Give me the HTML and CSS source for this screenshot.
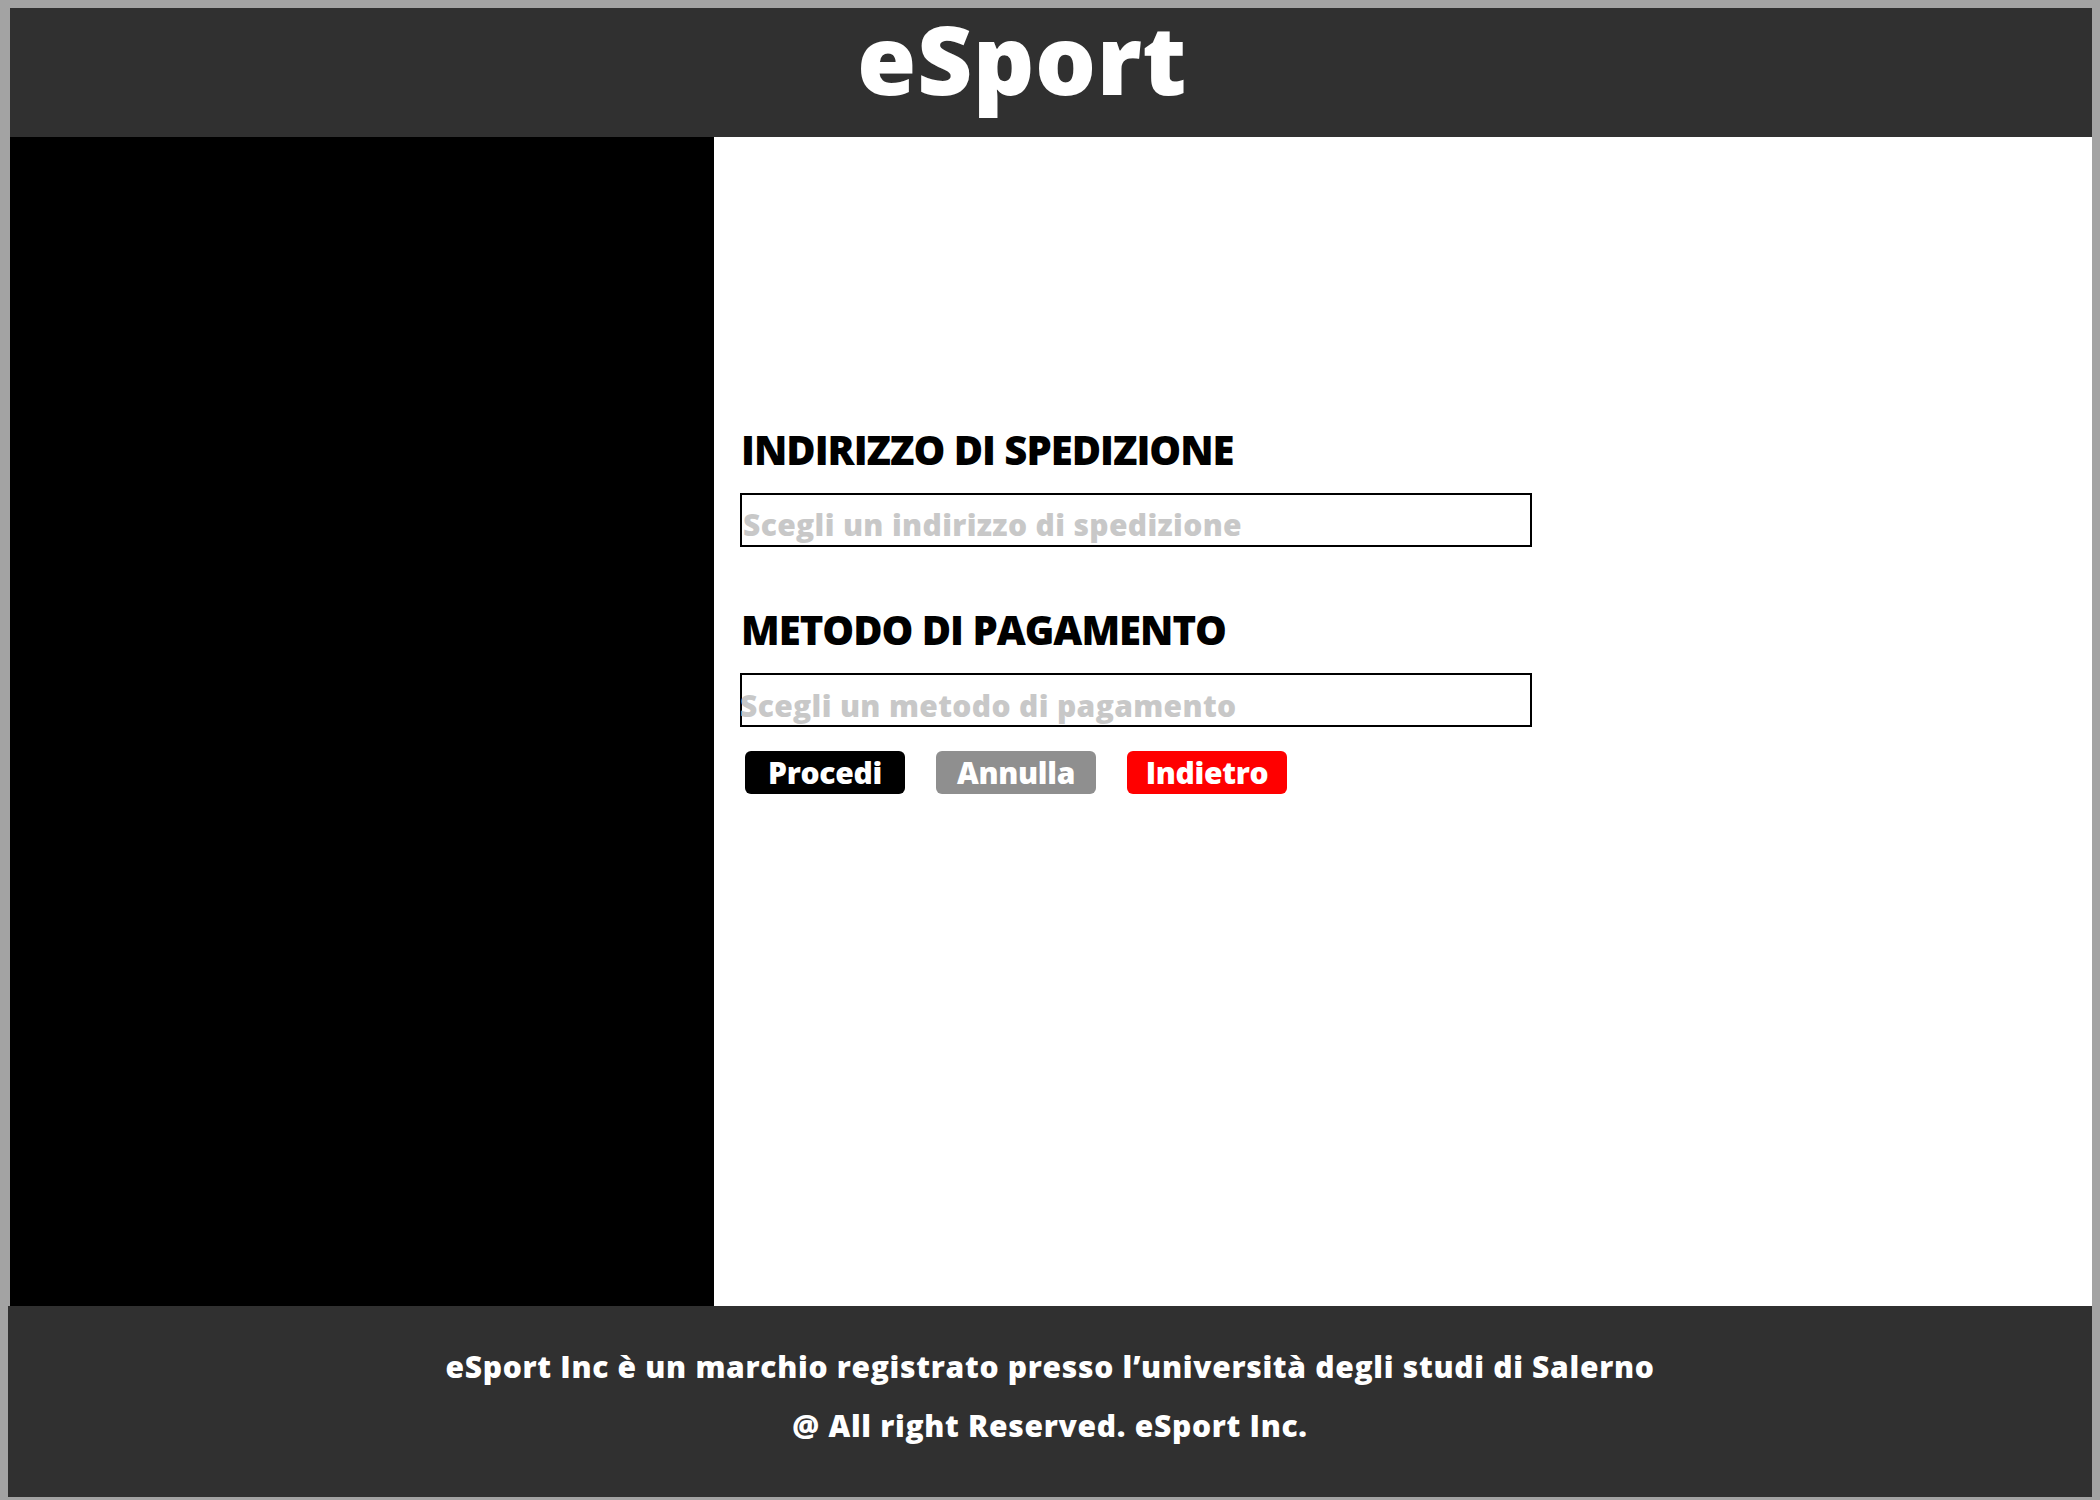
FILE: index.html
```html
<!DOCTYPE html>
<html lang="it">
<head>
<meta charset="utf-8">
<title>eSport - Checkout</title>
<link rel="stylesheet" href="styles.css">
</head>
<body>
<div class="page">
  <header class="topbar">
    <h1 class="brand">eSport</h1>
  </header>
  <div class="layout">
    <aside class="sidebar"></aside>
    <main class="content">
      <form class="checkout">
        <h2 class="section-title">INDIRIZZO DI SPEDIZIONE</h2>
        <div class="field field-address"><span class="placeholder">Scegli un indirizzo di spedizione</span></div>
        <h2 class="section-title section-title-pay">METODO DI PAGAMENTO</h2>
        <div class="field field-pay"><span class="placeholder">Scegli un metodo di pagamento</span></div>
        <div class="actions">
          <button type="button" class="btn btn-proceed">Procedi</button>
          <button type="button" class="btn btn-cancel">Annulla</button>
          <button type="button" class="btn btn-back">Indietro</button>
        </div>
      </form>
    </main>
  </div>
  <footer class="footer">
    <p class="footer-line">eSport Inc è un marchio registrato presso l’università degli studi di Salerno</p>
    <p class="footer-line">@ All right Reserved. eSport Inc.</p>
  </footer>
</div>
</body>
</html>
```
FILE: styles.css
```css
* {
  box-sizing: border-box;
}

html, body {
  margin: 0;
  padding: 0;
}

body {
  background: #a3a3a3;
  margin: 8px 8px 3px 8px;
  font-family: "Open Sans", "Liberation Sans", sans-serif;
  font-weight: 700;
}

.page {
  display: flex;
  flex-direction: column;
}

.topbar {
  margin-left: 2px;
  height: 129px;
  background: #303030;
  padding: 0 58px 0 0;
  text-align: center;
}

.brand {
  margin: 0;
  padding-top: 2px;
  font-size: 96px;
  line-height: 108px;
  height: 127px;
  margin-top: -6px;
  font-weight: 800;
  color: #ffffff;
  letter-spacing: 0.5px;
}

.layout {
  margin-left: 2px;
  height: 1169px;
  display: flex;
}

.sidebar {
  width: 704px;
  flex: 0 0 704px;
  background: #000000;
}

.content {
  flex: 1;
  background: #ffffff;
  padding: 293px 0 0 26px;
}

.checkout {
  display: flex;
  flex-direction: column;
  align-items: flex-start;
  margin: 0;
}

.section-title {
  margin: 0 0 23px 1px;
  font-size: 40px;
  line-height: 40px;
  font-weight: 800;
  color: #000000;
  letter-spacing: -1px;
}

.section-title-pay {
  margin-top: 63px;
}

.field {
  width: 792px;
  height: 54px;
  border: 2px solid #000000;
  background: #ffffff;
}

.placeholder {
  display: block;
  font-size: 30px;
  line-height: 30px;
  font-weight: 800;
  color: #c8c8c8;
  white-space: nowrap;
  letter-spacing: 0.35px;
}

.field-address .placeholder {
  margin: 15px 0 0 1px;
}

.field-pay .placeholder {
  margin: 16px 0 0 -2px;
}

.actions {
  display: flex;
  gap: 31px;
  margin: 24px 0 0 5px;
}

.btn {
  width: 160px;
  height: 43px;
  padding: 0;
  border: none;
  border-radius: 6px;
  font-family: "Open Sans", "Liberation Sans", sans-serif;
  font-weight: 800;
  font-size: 30px;
  line-height: 43px;
  color: #ffffff;
  letter-spacing: -0.3px;
  cursor: pointer;
}

.btn-proceed {
  background: #000000;
}

.btn-cancel {
  background: #8f8f8f;
}

.btn-back {
  background: #ff0000;
}

.footer {
  height: 191px;
  background: #303030;
  padding-top: 31px;
  text-align: center;
  color: #ffffff;
}

.footer-line {
  margin: 0;
  font-size: 30px;
  line-height: 59px;
  font-weight: 800;
  letter-spacing: 0.7px;
}
```
